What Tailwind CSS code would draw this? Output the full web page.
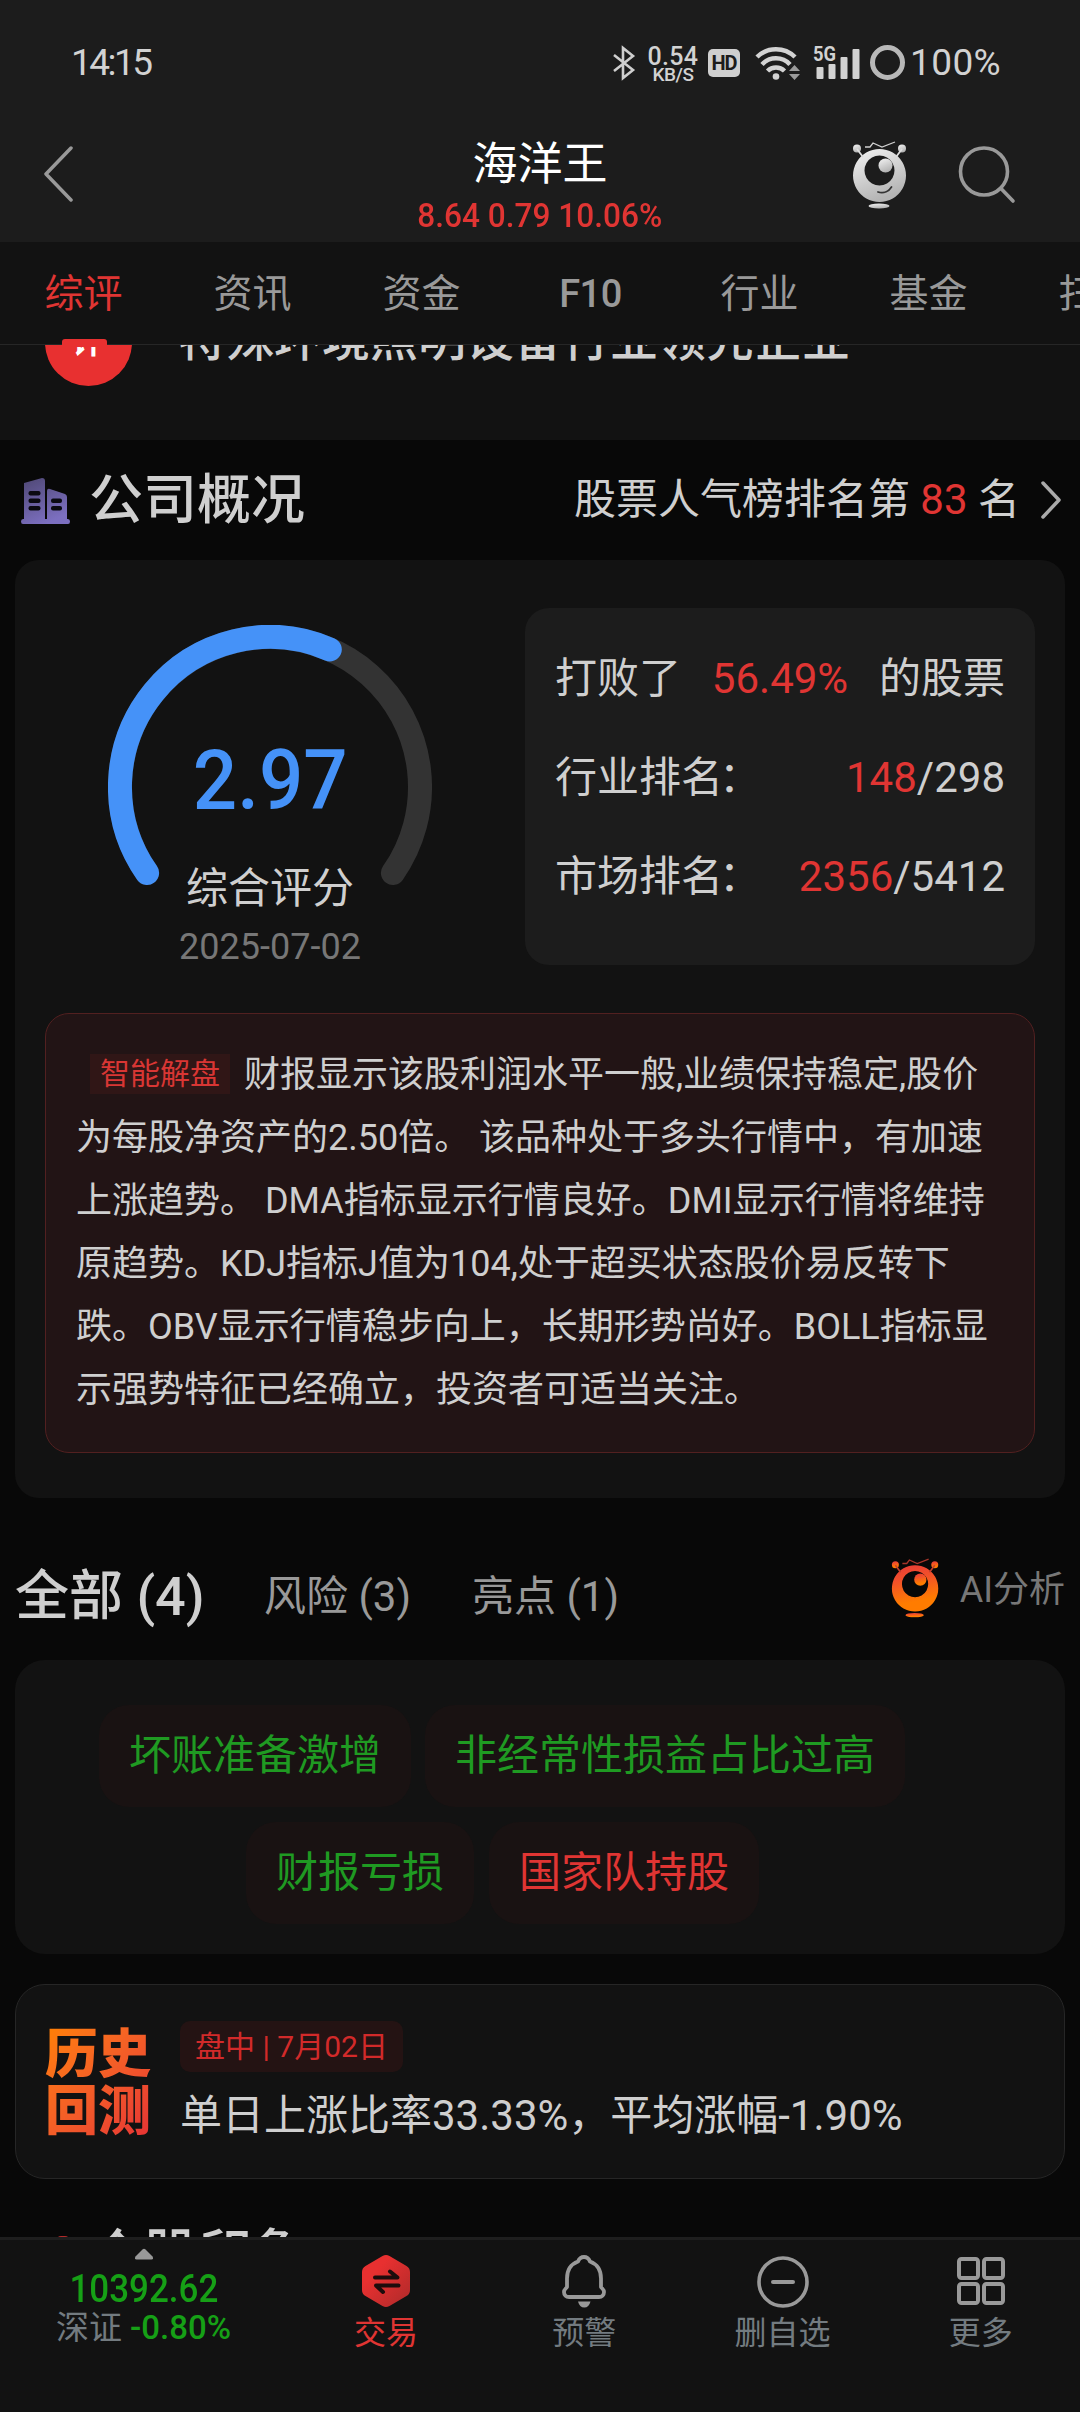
<!DOCTYPE html>
<html lang="zh-CN">
<head>
  <meta charset="UTF-8">
  <meta name="viewport" content="width=device-width, initial-scale=1.0">
  <title>海洋王</title>
  <script src="https://cdn.jsdelivr.net/npm/@tailwindcss/browser@4"></script>
</head>
<body class="bg-[#080808] font-[Roboto,'Noto_Sans_CJK_SC',sans-serif] text-[#cfcfcf]">
  <!-- Shared robot icon -->
  <svg class="absolute w-0 h-0">
    <defs>
      <linearGradient id="silver" x1="0" y1="0" x2="0.4" y2="1">
        <stop offset="0" stop-color="#f4f4f4"/><stop offset="1" stop-color="#b4b4b4"/>
      </linearGradient>
      <linearGradient id="flame" x1="0" y1="0" x2="0.2" y2="1">
        <stop offset="0" stop-color="#e83a38"/><stop offset="0.35" stop-color="#f2502a"/><stop offset="0.85" stop-color="#ff7c00"/>
      </linearGradient>
      <symbol id="robot" viewBox="0 0 56 68">
        <circle cx="5" cy="7.500" r="4"/>
        <circle cx="50" cy="7.500" r="4"/>
        <path fill-rule="evenodd" d="M27.500 8a26.500 26.500 0 1 0 .01 0zM27.500 14.500a15 15 0 1 1-.01 0z"/>
        <circle cx="33.500" cy="24.500" r="7"/>
        <ellipse cx="27" cy="65" rx="10.500" ry="2.500"/>
      </symbol>
    </defs>
  </svg>

  <div class="h-[2412px] w-[1080px] flex flex-col overflow-hidden">
    <!-- Status bar -->
    <div class="h-[125px] shrink-0 bg-[#1c1c1c] pl-[71px] flex items-center text-[#d2d2d2]">
      <span class="text-[37px] leading-none w-[541px] tracking-[-2.500px]">14:15</span>
      <svg class="w-6 h-[36px]" viewBox="0 0 24 36" fill="none" stroke="#cfcfcf" stroke-width="2.600"><path d="M2 10l19 15-10 8V3l10 8L2 26"/></svg>
      <div class="w-[62px] ml-[6px] pt-[2px] flex flex-col items-center leading-none font-medium">
        <span class="text-[25px] h-[21px] leading-[23px] tracking-[0.3px]">0.54</span>
        <span class="text-[19px] h-[17px] leading-[17px] tracking-[-0.5px]">KB/S</span>
      </div>
      <span class="ml-[4px] w-8 h-7 rounded-[5px] bg-[#cfcfcf] text-[#1c1c1c] text-[20px] leading-[29px] font-bold tracking-[-1px] text-center">HD</span>
      <svg class="ml-[15px] w-[47px] h-[36px]" viewBox="0 0 47 36" fill="none" stroke="#d2d2d2" stroke-width="4.500">
        <path d="M2 12a27 27 0 0 1 38 0M7 19.500a19 19 0 0 1 28 0M12.500 26a12 12 0 0 1 17 0"/>
        <circle cx="21" cy="31.500" r="3.300" fill="#d2d2d2" stroke="none"/>
        <path d="M34 26l5.500-6 5.500 6zM34 29l5.500 6 5.500-6z" fill="#9a9a9a" stroke="none"/>
      </svg>
      <svg class="ml-[10px] w-[49px] h-[36px]" viewBox="0 0 49 36" fill="#d2d2d2">
        <text x="1" y="16" font-size="20" font-weight="700" textLength="23" lengthAdjust="spacingAndGlyphs">5G</text>
        <rect x="4.500" y="22" width="7" height="12" rx="1"/><rect x="16.500" y="19" width="7" height="15" rx="1"/><rect x="28.500" y="12" width="7" height="22" rx="1"/><rect x="40.500" y="4" width="7" height="30" rx="1"/>
      </svg>
      <span class="ml-[9px] size-[35px] rounded-full border-[5.500px] border-[#b8b8b8]"></span>
      <span class="ml-[5px] text-[37px] leading-none tracking-[0.4px]">100%</span>
    </div>

    <!-- Header -->
    <div class="h-[117px] shrink-0 bg-[#1c1c1c] flex items-start">
      <svg class="ml-[42px] mt-[21px] w-8 h-14" viewBox="0 0 32 56" fill="none" stroke="#999" stroke-width="3.500" stroke-linecap="round" stroke-linejoin="round"><path d="M29 2L4 28l25 26"/></svg>
      <div class="ml-[266px] w-[400px] flex flex-col items-center">
        <h1 class="mt-[13px] h-[53px] text-[45px] leading-[54px] text-white">海洋王</h1>
        <p class="mt-1 h-[36px] text-[34px] leading-[40px] text-[#e03533] font-medium whitespace-nowrap scale-x-[0.93]">8.64 0.79 10.06%</p>
      </div>
      <svg class="ml-[112px] mt-[16px] w-[56px] h-[68px]" viewBox="0 0 56 68">
        <use href="#robot" fill="url(#silver)"/>
        <path d="M13 6h5l3-4 9 4 13-5" fill="none" stroke="#cfcfcf" stroke-width="1.300"/>
        <path d="M5 8l6 8M50 8l-6 8" stroke="#ddd" stroke-width="1.800"/>
        <path d="M26 51c6 2 11-1 13.500-5" fill="none" stroke="#333" stroke-width="1.800" stroke-linecap="round"/>
      </svg>
      <svg class="ml-[50px] mt-[21px] w-[58px] h-[58px]" viewBox="0 0 58 58" fill="none" stroke="#999" stroke-width="3.600" stroke-linecap="round"><circle cx="26" cy="25.500" r="23.500"/><path d="M43 42.500L55 55"/></svg>
    </div>

    <!-- Tabs -->
    <div class="h-[103px] shrink-0 bg-[#121212] border-b border-[#262626] flex items-center pt-[2px] text-[39px] leading-[60px] text-[#999] whitespace-nowrap -ml-px">
      <span class="w-[169px] shrink-0 text-center text-[#e03533]">综评</span>
      <span class="w-[169px] shrink-0 text-center">资讯</span>
      <span class="w-[169px] shrink-0 text-center">资金</span>
      <span class="w-[169px] shrink-0 text-center font-medium text-[38px] tracking-[-0.5px]">F10</span>
      <span class="w-[169px] shrink-0 text-center">行业</span>
      <span class="w-[169px] shrink-0 text-center">基金</span>
      <span class="w-[169px] shrink-0 text-center">扫雷</span>
    </div>

    <!-- Scrolled headline, cut off by the tabs -->
    <div class="h-[95px] shrink-0 bg-[#121212] relative">
      <span class="absolute left-[62px] -top-[6px] w-[45px] h-2 rounded-t-[3px] bg-[#e83030]"></span>
      <div class="h-full overflow-hidden flex items-start">
        <div class="ml-[45px] -mt-[46px] size-[87px] shrink-0 rounded-full bg-[#e83030] text-white text-[32px] leading-[86px] font-bold text-center">评</div>
        <div class="ml-[46px] -mt-[35px] text-[48px] leading-[60px] font-medium whitespace-nowrap">特殊环境照明设备行业领先企业</div>
      </div>
    </div>

    <!-- Section title -->
    <div class="h-[120px] shrink-0 pl-[20px] pr-[18px] flex items-center">
      <svg class="w-[50px] h-[48px]" viewBox="0 0 50 48">
        <defs><linearGradient id="violet" x1="0" y1="0" x2="0.5" y2="1"><stop offset="0" stop-color="#4e4773"/><stop offset="1" stop-color="#7c6fc0"/></linearGradient></defs>
        <path fill="url(#violet)" d="M4 7l18-5q3 0 3 3v38h2V15q0-3 3-2l15 5q2 1 2 3v22h1q2 0 2 2.500T48 48H3q-2 0-2-2.500T3 43h1z"/>
        <g fill="#0b0a12"><rect x="8.500" y="15" width="12" height="4.500" rx="2"/><rect x="8.500" y="22.500" width="12" height="4.500" rx="2"/><rect x="8.500" y="30" width="12" height="4.500" rx="2"/><rect x="31" y="22.500" width="11" height="4.500" rx="2"/><rect x="31" y="30" width="11" height="4.500" rx="2"/></g>
      </svg>
      <h2 class="ml-[19px] pt-[2px] text-[54px] leading-none font-medium">公司概况</h2>
      <div class="ml-auto text-[42px] leading-none whitespace-nowrap">股票人气榜排名第 <span class="text-[#e03533]">83</span> 名</div>
      <svg class="ml-[20px] w-[22px] h-[38px]" viewBox="0 0 22 38" fill="none" stroke="#aaa" stroke-width="3.500" stroke-linecap="round" stroke-linejoin="round"><path d="M3 2l16 17L3 36"/></svg>
    </div>

    <!-- Company overview -->
    <div class="mx-[15px] h-[938px] shrink-0 rounded-[24px] bg-[#121212] px-[30px] pt-[48px]">
      <div class="flex h-[357px]">
        <div class="w-[450px] flex flex-col items-center relative">
          <svg class="mt-[17px] w-[324px] h-[324px] shrink-0" viewBox="-162 -162 324 324" fill="none" stroke-width="24" stroke-linecap="round">
            <path stroke="#333" d="M-122.900 86A150 150 0 1 1 122.900 86"/>
            <path stroke="#4592f8" d="M-122.900 86A150 150 0 0 1 59.800 -137.600"/>
          </svg>
          <div class="absolute top-[123px] text-[84px] leading-[100px] font-medium text-[#4592f8] scale-x-[0.93]">2.97</div>
          <div class="-mt-[90px] shrink-0 text-[42px] leading-[60px]">综合评分</div>
          <div class="mt-[3px] shrink-0 text-[36px] leading-[50px] text-[#777]">2025-07-02</div>
        </div>
        <div class="w-[510px] ml-[30px] rounded-[24px] bg-[#1c1c1c] px-[30px] pt-[21px] text-[42px] leading-[99px] whitespace-nowrap">
          <div class="flex justify-between"><span>打败了</span><span class="text-[#e03533]">56.49%</span><span>的股票</span></div>
          <div class="flex justify-between"><span>行业排名<span class="-ml-1">：</span></span><span><span class="text-[#e03533]">148</span>/298</span></div>
          <div class="flex justify-between"><span>市场排名<span class="-ml-1">：</span></span><span><span class="text-[#e03533]">2356</span>/5412</span></div>
        </div>
      </div>

      <div class="mt-[48px] h-[440px] rounded-[24px] border border-[#522020] bg-[#221415] pl-[30px] pt-[30px] text-[36px] leading-[63px] whitespace-nowrap">
        <div class="flex items-center h-[63px]"><span class="ml-[14px] mr-[14px] mb-[4px] w-[140px] h-[40px] bg-[#301616] text-[#d93634] text-[30px] leading-[40px] text-center">智能解盘</span><span>财报显示该股利润水平一般,业绩保持稳定,股价</span></div>
        <div>为每股净资产的2.50倍。 该品种处于多头行情中，有加速</div>
        <div>上涨趋势。 DMA指标显示行情良好。DMI显示行情将维持</div>
        <div>原趋势。KDJ指标J值为104,处于超买状态股价易反转下</div>
        <div>跌。OBV显示行情稳步向上，长期形势尚好。BOLL指标显</div>
        <div>示强势特征已经确立，投资者可适当关注。</div>
      </div>
    </div>

    <!-- Filters -->
    <div class="h-[162px] shrink-0 flex items-center px-[15px] whitespace-nowrap pt-[36px]">
      <div class="text-[54px] leading-[60px] font-medium w-[249px]">全部 (4)</div>
      <div class="text-[42px] leading-[60px] text-[#999] w-[208px]">风险 (3)</div>
      <div class="text-[42px] leading-[60px] text-[#999]">亮点 (1)</div>
      <svg class="ml-auto mb-[18px] w-[49px] h-[60px]" viewBox="0 0 56 68">
        <use href="#robot" fill="url(#flame)"/>
        <path d="M13 6h5l3-4 9 4 13-5" fill="none" stroke="#a8352a" stroke-width="1.500"/>
        <path d="M5 8l6 8M50 8l-6 8" stroke="#c4402f" stroke-width="1.800"/>
      </svg>
      <div class="ml-[20px] mb-[14px] text-[36px] leading-[50px] text-[#777]">AI分析</div>
    </div>

    <!-- Tags -->
    <div class="mx-[15px] h-[294px] shrink-0 rounded-[30px] bg-[#121212] pt-[45px] text-[42px] leading-[102px] text-[#1f9a22] whitespace-nowrap">
      <div class="flex gap-[14px] pl-[84px]">
        <span class="h-[102px] px-[30px] rounded-[30px] bg-[#191212]">坏账准备激增</span>
        <span class="h-[102px] px-[30px] rounded-[30px] bg-[#191212]">非经常性损益占比过高</span>
      </div>
      <div class="flex gap-[15px] pl-[231px] mt-[15px]">
        <span class="h-[102px] px-[30px] rounded-[30px] bg-[#191212]">财报亏损</span>
        <span class="h-[102px] px-[30px] rounded-[30px] bg-[#191212] text-[#e03533]">国家队持股</span>
      </div>
    </div>

    <!-- Backtest -->
    <div class="mx-[15px] mt-[30px] h-[195px] shrink-0 rounded-[30px] bg-[#121212] border border-[#262626] flex pl-[29px] whitespace-nowrap">
      <div class="mt-[42px] w-[106px] h-[116px] text-[53px] leading-[57px] font-black bg-linear-to-br from-[#ff8000] to-[#e62e34] bg-clip-text text-transparent">历史<br>回测</div>
      <div class="ml-[29px] pt-[36px]">
        <span class="block w-[223px] h-[51px] rounded-[10px] bg-[#241313] text-[#d22a2a] text-[30px] leading-[52px] text-center">盘中 | 7月02日</span>
        <div class="mt-[14px] text-[42px] leading-[60px]">单日上涨比率33.33%，平均涨幅-1.90%</div>
      </div>
    </div>

    <!-- Next section, cut off by the bottom bar -->
    <div class="h-[58px] shrink-0 overflow-hidden flex items-start">
      <span class="ml-[57px] mt-[57px] w-3 h-3 rounded-sm bg-[#b02a2a]"></span>
      <h2 class="ml-[21px] mt-[42px] text-[54px] leading-[70px] font-medium">个股印象</h2>
    </div>

    <!-- Bottom bar -->
    <div class="h-[175px] shrink-0 bg-[#121212] border-t-[3px] border-[#1e1e1e] flex text-[32px] leading-[40px] text-[#737b80] whitespace-nowrap">
      <div class="w-[287px] flex flex-col items-center pt-[8px] text-[#16a016] font-medium">
        <svg class="w-5 h-3" viewBox="0 0 20 12" fill="#999"><path d="M8.500 1.500q1.500-1.500 3 0l7 7q1.500 3-1 3h-15q-2.500 0-1-3z"/></svg>
        <span class="mt-[7px] text-[38px] leading-[44px] scale-x-[0.92]">10392.62</span>
        <span class="-mt-[3px] text-[33px]"><span class="text-[#737b80] font-normal">深证</span> -0.80%</span>
      </div>
      <div class="flex-1 flex flex-col items-center pt-[14px] text-[#e03533]">
        <svg class="w-[50px] h-[54px]" viewBox="0 0 50 54">
          <defs><linearGradient id="hex" x1="0" y1="0" x2="1" y2="1"><stop offset="0.300" stop-color="#e83030"/><stop offset="1" stop-color="#ad2a2a"/></linearGradient></defs>
          <path fill="url(#hex)" d="M21.500 2q3.500-2 7 0l17 10q3.500 2 3.500 6v18q0 4-3.500 6l-17 10q-3.500 2-7 0l-17-10Q1 40 1 36V18q0-4 3.500-6z"/>
          <path fill="none" stroke="#1d0c0c" stroke-width="4" stroke-linecap="round" stroke-linejoin="round" d="M14 23.500h22.500L29 17.500M37.500 31.500H15l7 6.500"/>
        </svg>
        <span class="mt-[5px]">交易</span>
      </div>
      <div class="flex-1 flex flex-col items-center pt-[14px]">
        <svg class="w-[50px] h-[54px]" viewBox="0 0 50 54" fill="none" stroke="#999" stroke-width="3.800" stroke-linejoin="round"><path d="M25 3c4 0 5 2 6 4.500 8 3 11 9 11 17V33c1 1.500 3 2.500 3 5 0 3-2 5-5 5H10c-3 0-5-2-5-5 0-2.500 2-3.500 3-5v-8.500c0-8 3-14 11-17C20 5 21 3 25 3z"/><path d="M19 47.500h12.500q-1.500 6-6.250 6T19 47.500z" fill="#999" stroke="none"/></svg>
        <span class="mt-[5px]">预警</span>
      </div>
      <div class="flex-1 flex flex-col items-center pt-[14px]">
        <svg class="w-[54px] h-[54px]" viewBox="0 0 54 54" fill="none" stroke="#999" stroke-width="3.600" stroke-linecap="round"><circle cx="27" cy="28" r="24"/><path d="M17 28h20" stroke-width="4"/></svg>
        <span class="mt-[5px]">删自选</span>
      </div>
      <div class="flex-1 flex flex-col items-center pt-[14px]">
        <svg class="w-[50px] h-[54px]" viewBox="0 0 50 54" fill="none" stroke="#999" stroke-width="4"><rect x="3" y="5" width="19" height="19" rx="2.500"/><rect x="28" y="5" width="19" height="19" rx="2.500"/><rect x="3" y="30" width="19" height="19" rx="2.500"/><rect x="28" y="30" width="19" height="19" rx="2.500"/></svg>
        <span class="mt-[5px]">更多</span>
      </div>
    </div>
  </div>
</body>
</html>
